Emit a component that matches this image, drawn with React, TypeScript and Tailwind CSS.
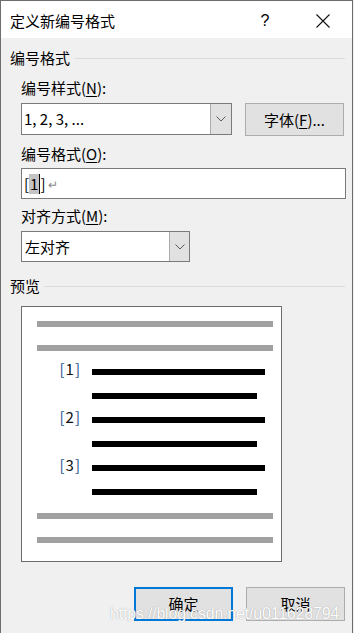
import React from "react";

const font = { fontFamily: '"Noto Sans CJK SC", "Noto Sans", sans-serif' };

function Chevron() {
  return (
    <svg width="10" height="6" viewBox="0 0 10 6" fill="none">
      <path d="M0.5 0.5 L5 5 L9.5 0.5" stroke="#5a5a5a" strokeWidth="1" />
    </svg>
  );
}

function Section({ title }: { title: string }) {
  return (
    <div className="flex items-center h-[20px] pl-[9px] pr-[7px]">
      <span className="leading-[20px]">{title}</span>
      <div className="flex-1 h-px bg-[#dcdcdc] ml-[5px]" />
    </div>
  );
}

function U({ c }: { c: string }) {
  return <span className="underline underline-offset-2">{c}</span>;
}

function Bar() {
  return <div className="h-[6px] w-[236px] bg-[#a0a0a0]" />;
}

export default function App() {
  return (
    <div className="w-[354px] h-[633px] bg-[#f0f0f0] relative overflow-hidden text-[15px] text-black" style={font}>
      <div className="w-[353px] h-[634px] border-t border-l border-r border-[#6e6e6e] bg-[#f0f0f0] flex flex-col">
        {/* title bar */}
        <div className="h-[37px] bg-white flex items-center shrink-0">
          <span className="pl-[9px] leading-[20px] mt-[2px]">定义新编号格式</span>
          <div className="flex-1" />
          <span className="w-[14px] text-center mr-[44px] text-[16px] mt-[2px]" style={{ fontFamily: '"Liberation Sans", sans-serif' }}>?</span>
          <svg width="14" height="14" viewBox="0 0 14 14" className="mr-[22px] mt-[2px]">
            <path d="M0.5 0.5 L13.5 13.5 M13.5 0.5 L0.5 13.5" stroke="#111" strokeWidth="1.1" />
          </svg>
        </div>

        <div className="mt-[10px]">
          <Section title="编号格式" />
        </div>

        <div className="pl-[20px] pr-[7px]">
          <div className="mt-[10px] leading-[20px]">
            编号样式(<U c="N" />):
          </div>
          <div className="mt-[5px] flex items-start">
            <div className="w-[211px] h-[32px] flex border border-[#7a7a7a] bg-white">
              <div className="flex-1 flex items-center pl-[2px] leading-[20px]">1, 2, 3, ...</div>
              <div className="w-[21px] bg-[#e1e1e1] border-l border-[#acacac] flex items-center justify-center">
                <Chevron />
              </div>
            </div>
            <div className="ml-[13px] w-[99px] h-[33px] bg-[#e1e1e1] border border-[#adadad] flex items-center justify-center leading-[20px]">
              字体(<U c="F" />)...
            </div>
          </div>

          <div className="mt-[8px] leading-[20px]">
            编号格式(<U c="O" />):
          </div>
          <div className="mt-[4px] w-[325px] h-[31px] border border-[#7a7a7a] bg-white flex items-center pl-[2px]">
            <span className="leading-[20px]">[</span>
            <span className="bg-[#c4c4c4] leading-[20px] px-[1px]">1</span>
            <span className="w-px h-[20px] bg-black" />
            <span className="leading-[20px]">]</span>
            <span className="text-[#8a8a8a] text-[12px] ml-[3px] mt-[1px]">↵</span>
          </div>

          <div className="mt-[7px] leading-[20px]">
            对齐方式(<U c="M" />):
          </div>
          <div className="mt-[5px] w-[169px] h-[31px] flex border border-[#7a7a7a] bg-white">
            <div className="flex-1 flex items-center pl-[3px] leading-[20px]">左对齐</div>
            <div className="w-[20px] bg-[#e1e1e1] border-l border-[#acacac] flex items-center justify-center">
              <Chevron />
            </div>
          </div>
        </div>

        <div className="mt-[14px]">
          <div className="flex items-center h-[20px] pl-[9px] pr-[7px]">
            <span className="leading-[20px]">预览</span>
            <div className="flex-1 h-px bg-[#dcdcdc] ml-[4px]" />
          </div>
        </div>

        <div className="pl-[20px] mt-[10px]">
          <div className="w-[261px] h-[256px] border border-[#6d6d6d] bg-white pl-[15px] pt-[14px] flex flex-col gap-[18px]">
            <Bar />
            <Bar />
            {["1", "2", "3"].map((n) => (
              <React.Fragment key={n}>
                <div className="relative flex items-center h-[6px]">
                  <span
                    className="absolute left-[22px] top-[-10px] w-[22px] text-right leading-[20px] text-[15px] text-[#111] tracking-[1px]"
                    style={{ fontFamily: '"Noto Sans CJK SC", sans-serif' }}
                  >
                    <span className="text-[#24528f]">[</span>
                    {n}
                    <span className="text-[#24528f]">]</span>
                  </span>
                  <div className="ml-[55px] h-[6px] w-[173px] bg-black" />
                </div>
                <div className="ml-[55px] h-[6px] w-[165px] bg-black" />
              </React.Fragment>
            ))}
            <Bar />
            <Bar />
          </div>
        </div>

        <div className="mt-[25px] flex justify-end pr-[7px] gap-[13px]">
          <div className="w-[99px] h-[34px] bg-[#e1e1e1] border-2 border-[#0078d7] flex items-center justify-center leading-[20px]">
            确定
          </div>
          <div className="w-[99px] h-[34px] bg-[#e1e1e1] border border-[#adadad] flex items-center justify-center leading-[20px]">
            取消
          </div>
        </div>
      </div>

      <div
        className="absolute left-[110px] top-[603px] text-[16px] leading-[22px] text-white tracking-[-0.2px] pointer-events-none"
        style={{ fontFamily: '"Liberation Sans", sans-serif', textShadow: "0 0 1px rgba(120,120,120,0.8)" }}
      >
        https://blog.csdn.net/u011628794
      </div>
    </div>
  );
}
